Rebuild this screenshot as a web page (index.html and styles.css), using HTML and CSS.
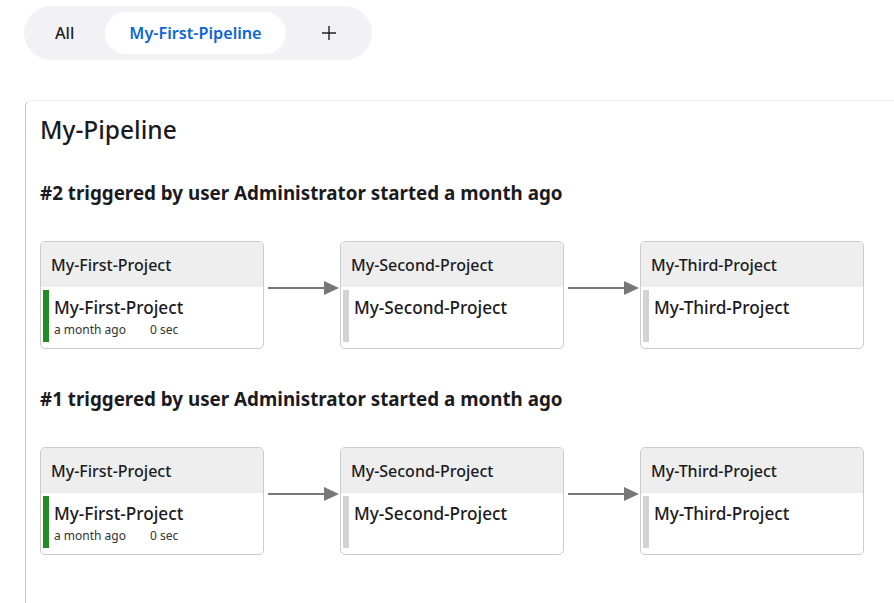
FILE: index.html
```html
<!DOCTYPE html>
<html>
<head>
<meta charset="utf-8">
<link rel="stylesheet" href="styles.css">
</head>
<body>
<div class="tabs">
  <div class="tab">All</div>
  <div class="tab active">My-First-Pipeline</div>
  <div class="tab plus"><svg width="16" height="16" viewBox="0 0 16 16"><path d="M8 1V15M1 8H15" stroke="#222" stroke-width="1.4" fill="none"/></svg></div>
</div>
<div class="panel">
  <h1 class="title">My-Pipeline</h1>
  <section class="run">
    <h2 class="run-title">#2 triggered by user Administrator started a month ago</h2>
    <div class="flow">
      <div class="card">
        <div class="card-head">My-First-Project</div>
        <div class="card-body">
          <div class="bar ok"></div>
          <div class="info">
            <div class="name">My-First-Project</div>
            <div class="meta"><span>a month ago</span><span>0 sec</span></div>
          </div>
        </div>
      </div>
      <div class="arrow"><svg width="72" height="16" viewBox="0 0 72 16"><path d="M0 8H58" stroke="#777" stroke-width="2"/><path d="M56 1L71 8L56 15Z" fill="#777"/></svg></div>
      <div class="card">
        <div class="card-head">My-Second-Project</div>
        <div class="card-body">
          <div class="bar"></div>
          <div class="info">
            <div class="name">My-Second-Project</div>
          </div>
        </div>
      </div>
      <div class="arrow"><svg width="72" height="16" viewBox="0 0 72 16"><path d="M0 8H58" stroke="#777" stroke-width="2"/><path d="M56 1L71 8L56 15Z" fill="#777"/></svg></div>
      <div class="card">
        <div class="card-head">My-Third-Project</div>
        <div class="card-body">
          <div class="bar"></div>
          <div class="info">
            <div class="name">My-Third-Project</div>
          </div>
        </div>
      </div>
    </div>
  </section>
  <section class="run">
    <h2 class="run-title">#1 triggered by user Administrator started a month ago</h2>
    <div class="flow">
      <div class="card">
        <div class="card-head">My-First-Project</div>
        <div class="card-body">
          <div class="bar ok"></div>
          <div class="info">
            <div class="name">My-First-Project</div>
            <div class="meta"><span>a month ago</span><span>0 sec</span></div>
          </div>
        </div>
      </div>
      <div class="arrow"><svg width="72" height="16" viewBox="0 0 72 16"><path d="M0 8H58" stroke="#777" stroke-width="2"/><path d="M56 1L71 8L56 15Z" fill="#777"/></svg></div>
      <div class="card">
        <div class="card-head">My-Second-Project</div>
        <div class="card-body">
          <div class="bar"></div>
          <div class="info">
            <div class="name">My-Second-Project</div>
          </div>
        </div>
      </div>
      <div class="arrow"><svg width="72" height="16" viewBox="0 0 72 16"><path d="M0 8H58" stroke="#777" stroke-width="2"/><path d="M56 1L71 8L56 15Z" fill="#777"/></svg></div>
      <div class="card">
        <div class="card-head">My-Third-Project</div>
        <div class="card-body">
          <div class="bar"></div>
          <div class="info">
            <div class="name">My-Third-Project</div>
          </div>
        </div>
      </div>
    </div>
  </section>
</div>
</body>
</html>
```
FILE: styles.css
```css
* { box-sizing: border-box; }
html, body { margin: 0; padding: 0; background: #fff; }
body {
  font-family: "Noto Sans", "Open Sans", sans-serif;
  color: #1b1b1f;
  width: 894px;
  height: 603px;
  overflow: hidden;
}
.tabs {
  display: inline-flex;
  gap: 6px;
  margin: 6px 0 0 24px;
  padding: 6px;
  background: #f2f2f6;
  border-radius: 27px;
}
.tab {
  height: 42px;
  padding: 0 24px;
  display: flex;
  align-items: center;
  font-size: 16.2px;
  font-weight: 500;
  color: #222;
  border-radius: 21px;
}
.tab:first-child { padding: 0 25px; }
.tab.active {
  background: #fff;
  color: #0a66d4;
  font-weight: 600;
}
.tab.plus {
  width: 74px;
  justify-content: center;
  padding: 0;
}
.panel {
  margin: 40px 0 0 25px;
  border-left: 1px solid #c9c9c9;
  border-top: 1px solid #efefef;
  border-top-left-radius: 6px;
  padding: 13px 0 40px 14px;
  height: 504px;
}
.title {
  margin: 0;
  font-size: 24.5px;
  font-weight: 500;
  line-height: 32px;
}
.run { margin-top: 35px; }
.run + .run { margin-top: 38px; }
.run-title {
  margin: 0 0 36px;
  font-size: 18.8px;
  font-weight: 700;
  line-height: 24px;
}
.flow {
  display: flex;
  align-items: flex-start;
}
.card {
  width: 224px;
  height: 108px;
  border: 1px solid #cccccc;
  border-radius: 5px;
  overflow: hidden;
  display: flex;
  flex-direction: column;
}
.card-head {
  height: 45px;
  background: #eeeeee;
  padding-left: 10px;
  display: flex;
  align-items: center;
  font-size: 16px;
  font-weight: 500;
}
.card-body {
  flex: 1;
  display: flex;
  gap: 5px;
  padding: 3px 0 6px 2px;
}
.bar {
  width: 6px;
  background: #d3d3d3;
}
.bar.ok { background: #238b23; }
.info {
  display: flex;
  flex-direction: column;
  padding-top: 4px;
}
.name {
  font-size: 17.2px;
  font-weight: 500;
  line-height: 27px;
}
.meta {
  font-size: 12px;
  color: #333;
  line-height: 14px;
  margin-top: 2px;
  display: flex;
  gap: 24px;
}
.arrow {
  width: 76px;
  padding: 39px 0 0 4px;
}
.arrow svg { display: block; }
```
